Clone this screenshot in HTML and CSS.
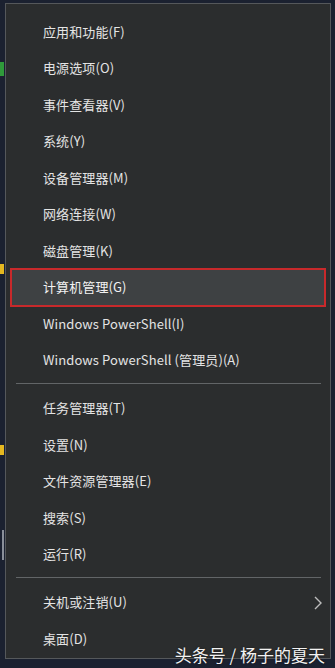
FILE: index.html
```html
<!DOCTYPE html>
<html lang="zh-CN">
<head>
<meta charset="utf-8">
<link rel="stylesheet" href="styles.css">
</head>
<body>
<div class="screen">
  <div class="desk">
    <span class="frag f1"></span>
    <span class="frag f2"></span>
    <span class="frag f3"></span>
    <span class="frag f4"></span>
  </div>
  <nav class="menu">
    <div class="group">
      <div class="item">应用和功能(F)</div>
      <div class="item">电源选项(O)</div>
      <div class="item">事件查看器(V)</div>
      <div class="item">系统(Y)</div>
      <div class="item">设备管理器(M)</div>
      <div class="item">网络连接(W)</div>
      <div class="item">磁盘管理(K)</div>
      <div class="item active">计算机管理(G)</div>
      <div class="item">Windows PowerShell(I)</div>
      <div class="item">Windows PowerShell (管理员)(A)</div>
    </div>
    <div class="sep"></div>
    <div class="group">
      <div class="item">任务管理器(T)</div>
      <div class="item">设置(N)</div>
      <div class="item">文件资源管理器(E)</div>
      <div class="item">搜索(S)</div>
      <div class="item">运行(R)</div>
    </div>
    <div class="sep"></div>
    <div class="group">
      <div class="item sub">关机或注销(U)
        <svg class="chev" width="8" height="14" viewBox="0 0 8 14"><path d="M1 1 L7 7 L1 13" fill="none" stroke="#bdbdbd" stroke-width="1.4"/></svg>
      </div>
      <div class="item">桌面(D)</div>
    </div>
  </nav>
  <div class="mark">头条号 / 杨子的夏天</div>
</div>
</body>
</html>
```
FILE: styles.css
```css
html, body {
  margin: 0;
  padding: 0;
}
body {
  background: #1b2130;
  font-family: "Noto Sans CJK SC", "Noto Sans", sans-serif;
  width: 335px;
  height: 668px;
  overflow: hidden;
}
.screen {
  position: relative;
  display: flex;
  width: 335px;
  height: 668px;
}
.desk {
  position: relative;
  width: 5px;
  flex: none;
}
.frag {
  position: absolute;
  left: 0;
  width: 4px;
}
.f1 { top: 62px; height: 14px; background: #2f9a3a; }
.f2 { top: 264px; height: 10px; background: #e5b820; }
.f3 { top: 445px; height: 10px; background: #e5b820; }
.f4 { top: 530px; height: 30px; background: #8a8f99; width: 2px; left: 2px; }
.menu {
  margin-top: 3px;
  width: 326px;
  height: 656px;
  box-sizing: border-box;
  background: #2b2d2e;
  border: 1px solid #55585b;
  padding-top: 9px;
  display: flex;
  flex-direction: column;
}
.item {
  position: relative;
  height: 36.5px;
  display: flex;
  align-items: center;
  padding-left: 37px;
  color: #e4e4e4;
  font-size: 13px;
  letter-spacing: 0.1px;
}
.active {
  isolation: isolate;
  color: #f2f2f2;
}
.active::before {
  content: "";
  position: absolute;
  left: 4px;
  right: 4px;
  top: -1px;
  bottom: -1.5px;
  border: 2px solid #c8292b;
  background: #3e4143;
  z-index: -1;
}
.sep {
  height: 11.5px;
  display: flex;
  align-items: center;
  padding: 0 9px 0 10px;
}
.sep::before {
  content: "";
  flex: 1;
  height: 1px;
  background: #626567;
}
.chev {
  position: absolute;
  right: 8px;
  top: 12px;
}
.mark {
  position: absolute;
  right: 10px;
  bottom: 1px;
  color: #f2f2f2;
  font-size: 17px;
  line-height: 24px;
  text-shadow: 0 0 2px rgba(0,0,0,0.6);
}
```
